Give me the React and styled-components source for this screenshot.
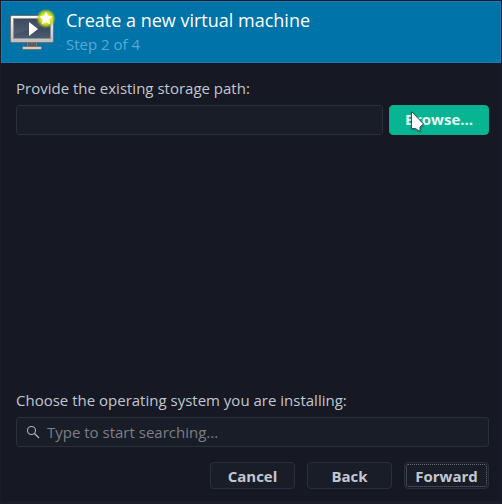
import React from "react";
import styled, { createGlobalStyle } from "styled-components";

const GlobalStyle = createGlobalStyle`
  *, *::before, *::after { box-sizing: border-box; }
  body {
    margin: 0;
    background: #161823;
    color: #c3c7d1;
    font-family: "Open Sans", "Noto Sans", sans-serif;
    font-size: 15px;
    line-height: 20px;
  }
`;

const Dialog = styled.main`
  display: flex;
  flex-direction: column;
  min-height: 100vh;
  border: 1px solid #1b1d2a;
  border-bottom-width: 3px;
  background: #161823;
`;

const Header = styled.header`
  display: flex;
  align-items: center;
  gap: 8px;
  height: 62px;
  padding: 0 8px;
  border: 1px solid #1a7bb2;
  background: #0073a8;
`;

const Titles = styled.div`
  display: flex;
  flex-direction: column;
  gap: 2px;
  padding-bottom: 2px;
`;

const Title = styled.h1`
  margin: 0;
  color: #ffffff;
  font-size: 18px;
  font-weight: 400;
  line-height: 24px;
`;

const Step = styled.p`
  margin: 0;
  color: #59a9d8;
`;

const Form = styled.form`
  display: flex;
  flex: 1;
  flex-direction: column;
  justify-content: space-between;
  padding: 15px 12px 12px 15px;
`;

const Section = styled.section`
  display: flex;
  flex-direction: column;
  gap: 7px;
`;

const Label = styled.label`
  line-height: 20px;
`;

const Row = styled.div`
  display: flex;
  gap: 6px;
`;

const Field = styled.div`
  display: flex;
  flex: 1 0 auto;
  align-items: center;
  gap: 7px;
  height: 30px;
  padding: 0 9px;
  border: 1px solid #2c2e3a;
  border-radius: 3px;
  background: #191d28;
`;

const TextInput = styled.input`
  flex: 1;
  min-width: 0;
  padding: 0;
  border: 0;
  outline: 0;
  background: transparent;
  color: inherit;
  font: inherit;

  &::placeholder {
    color: #7d7f83;
    opacity: 1;
  }
`;

const Button = styled.button`
  flex: none;
  width: 85px;
  height: 27px;
  padding: 0;
  border: 1px solid #2c2e3a;
  border-radius: 4px;
  background: #191d28;
  color: #c3c7d1;
  font: inherit;
  font-weight: 700;
  outline: ${({ $focused }) => ($focused ? "1px dotted #6a6d78" : "none")};
  outline-offset: -3px;
`;

const BrowseButton = styled(Button)`
  position: relative;
  width: 100px;
  height: 30px;
  padding-bottom: 2px;
  border-color: #0aad8c;
  background: #08b593;
  color: #e5f7f2;
`;

const Pointer = styled.svg`
  position: absolute;
  top: 4px;
  left: 19px;
  filter: drop-shadow(0 1px 1px rgba(0, 0, 0, 0.3));
`;

const Actions = styled.div`
  display: flex;
  justify-content: flex-end;
  gap: 12px;
`;

const Footer = styled.div`
  display: flex;
  flex-direction: column;
  gap: 15px;
`;

function MonitorIcon() {
  return (
    <svg width="48" height="48" viewBox="0 0 48 48" aria-hidden="true">
      <defs>
        <linearGradient id="screen" x1="0" y1="0" x2="0" y2="1">
          <stop offset="0" stopColor="#303b50" />
          <stop offset="1" stopColor="#4c5b70" />
        </linearGradient>
        <linearGradient id="metal" x1="0" y1="0" x2="0" y2="1">
          <stop offset="0" stopColor="#fafafa" />
          <stop offset="1" stopColor="#bdbdbd" />
        </linearGradient>
        <radialGradient id="glow">
          <stop offset="0.4" stopColor="#f0f51a" />
          <stop offset="0.7" stopColor="#c3d81a" stopOpacity="0.85" />
          <stop offset="1" stopColor="#8db634" stopOpacity="0" />
        </radialGradient>
      </defs>
      <path d="M17 34h10v5H17z" fill="#777" />
      <path d="M18 35h8v3h-8z" fill="#5d5d5d" />
      <rect x="12.5" y="38.5" width="19" height="3" rx="1" fill="#cdcdcd" stroke="#77716c" />
      <rect x="0.5" y="7.5" width="43" height="27" rx="1.5" fill="url(#metal)" stroke="#77716c" />
      <rect x="3.5" y="10.5" width="37" height="20" fill="url(#screen)" stroke="#8c9299" />
      <path d="M4 11h36v5L4 26z" fill="#fff" opacity="0.07" />
      <path d="M19 14v14l9-7z" fill="#fff" />
      <circle cx="36" cy="10.5" r="10" fill="url(#glow)" />
      <path d="m36 4.5 1.7 3.7 4 .5-3 2.8.8 4-3.5-2-3.5 2 .8-4-3-2.8 4-.5z" fill="#fff" stroke="#fff" strokeLinejoin="round" />
    </svg>
  );
}

function SearchIcon() {
  return (
    <svg width="14" height="14" viewBox="0 0 14 14" fill="none" stroke="#b0b4bd" aria-hidden="true">
      <circle cx="5.5" cy="5.5" r="4" strokeWidth="1.1" />
      <path d="m8.5 8.5 4.5 4.5" strokeWidth="1.3" />
    </svg>
  );
}

export default function App() {
  return (
    <>
      <GlobalStyle />
      <Dialog>
        <Header>
          <MonitorIcon />
          <Titles>
            <Title>Create a new virtual machine</Title>
            <Step>Step 2 of 4</Step>
          </Titles>
        </Header>
        <Form onSubmit={(event) => event.preventDefault()}>
          <Section>
            <Label htmlFor="storage">Provide the existing storage path:</Label>
            <Row>
              <Field>
                <TextInput id="storage" type="text" />
              </Field>
              <BrowseButton type="button">
                Browse...
                <Pointer width="16" height="24" viewBox="0 0 16 24" aria-hidden="true">
                  <path
                    d="M2.5 1.5v17h4l4.5 3V17l3.5-3z"
                    fill="#fff"
                    stroke="#3e4e50"
                    strokeLinejoin="round"
                  />
                </Pointer>
              </BrowseButton>
            </Row>
          </Section>
          <Footer>
            <Section>
              <Label htmlFor="system">Choose the operating system you are installing:</Label>
              <Field>
                <SearchIcon />
                <TextInput id="system" type="text" placeholder="Type to start searching..." />
              </Field>
            </Section>
            <Actions>
              <Button type="button">Cancel</Button>
              <Button type="button">Back</Button>
              <Button type="submit" $focused>Forward</Button>
            </Actions>
          </Footer>
        </Form>
      </Dialog>
    </>
  );
}
